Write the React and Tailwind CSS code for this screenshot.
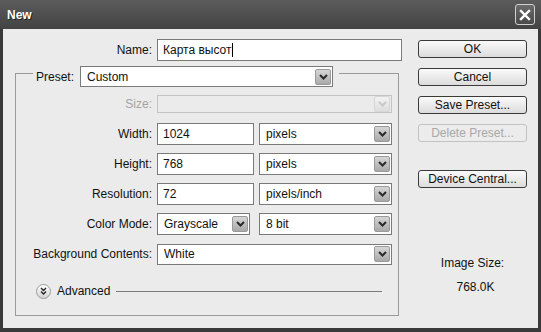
import React from "react";

function Chevron({ color = "#2a2a2a" }) {
  return (
    <svg width="9" height="6" viewBox="0 0 9 6">
      <path d="M1 1 L4.5 4.5 L8 1" fill="none" stroke={color} strokeWidth="2" />
    </svg>
  );
}

function Select({ className = "", text, disabled = false }) {
  return (
    <div
      className={`flex items-center justify-between border ${
        disabled ? "border-[#c4c4c4] bg-[#ebebeb]" : "border-[#7a7a7a] bg-white"
      } ${className}`}
    >
      <span className="pl-[6px] leading-none text-[#111]">{text}</span>
      <div
        className={`mr-[1px] flex h-[16px] w-[16px] items-center justify-center rounded-[2px] border ${
          disabled
            ? "border-[#d6d6d6] bg-gradient-to-b from-[#f2f2f2] to-[#dedede]"
            : "border-[#9a9a9a] bg-gradient-to-b from-[#d6d6d6] to-[#a9a9a9]"
        }`}
      >
        <Chevron color={disabled ? "#c8c8c8" : "#2a2a2a"} />
      </div>
    </div>
  );
}

function Input({ className = "", text, caret = false }) {
  return (
    <div className={`flex items-center border border-[#7a7a7a] bg-white ${className}`}>
      <span className="pl-[5px] leading-none text-[#111]">{text}</span>
      {caret && <span className="ml-[1px] h-[14px] w-[1px] bg-black" />}
    </div>
  );
}

function Row({ label, disabled = false, children, className = "mt-[8px]" }) {
  return (
    <div className={`flex h-[22px] items-center ${className}`}>
      <div className={`w-[136px] text-right ${disabled ? "text-[#a3a3a3]" : "text-[#111]"}`}>
        {label}
      </div>
      <div className="ml-[5px] flex items-center">{children}</div>
    </div>
  );
}

function Btn({ children, disabled = false, className = "" }) {
  return (
    <div
      className={`flex h-[18px] w-[109px] items-center justify-center rounded-[3px] border ${
        disabled
          ? "border-[#c2c2c2] text-[#a8a8a8] bg-[#ececec]"
          : "border-[#3a3a3a] text-[#111] bg-gradient-to-b from-[#fafafa] to-[#dcdcdc]"
      } ${className}`}
    >
      {children}
    </div>
  );
}

export default function App() {
  return (
    <div className="flex h-[332px] w-[541px] flex-col bg-[#3a3a3a] font-['Liberation_Sans',Arial,sans-serif] text-[12px]">
      {/* title bar */}
      <div className="flex h-[29px] items-center justify-between bg-gradient-to-b from-[#5c5c5c] to-[#434343] pl-[7px] pr-[6px]">
        <span className="text-[12px] font-bold text-white [text-shadow:1px_1px_0_#222]">New</span>
        <div className="flex h-[21px] w-[20px] items-center justify-center rounded-[3px] border border-[#d0d0d0] bg-gradient-to-b from-[#6a6a6a] to-[#4a4a4a]">
          <svg width="12" height="12" viewBox="0 0 12 12">
            <path d="M2 2 L10 10 M10 2 L2 10" stroke="white" strokeWidth="2.4" strokeLinecap="square" />
          </svg>
        </div>
      </div>

      {/* body */}
      <div className="mx-[3px] mb-[4px] flex flex-1 bg-[#ebebeb]">
        {/* left */}
        <div className="flex w-[400px] flex-col">
          <div className="mt-[10px] flex h-[22px] items-center">
            <div className="w-[149px] text-right text-[#111]">Name:</div>
            <Input className="ml-[5px] h-[22px] w-[245px]" text="Карта высот" caret />
          </div>

          <div className="ml-[12px] mt-[12px] flex h-[243px] w-[384px] flex-col border border-[#9a9a9a]">
            <div className="-mt-[8px] ml-[17px] flex w-fit items-center bg-[#ebebeb] pl-[3px] pr-[6px]">
              <span className="text-[#111]">Preset:</span>
              <Select className="ml-[6px] h-[21px] w-[253px]" text="Custom" />
            </div>

            <Row label="Size:" disabled className="mt-[6px]">
              <Select className="h-[18px] w-[235px]" text="" disabled />
            </Row>
            <Row label="Width:">
              <Input className="h-[22px] w-[97px]" text="1024" />
              <Select className="ml-[5px] h-[22px] w-[133px]" text="pixels" />
            </Row>
            <Row label="Height:">
              <Input className="h-[22px] w-[97px]" text="768" />
              <Select className="ml-[5px] h-[22px] w-[133px]" text="pixels" />
            </Row>
            <Row label="Resolution:">
              <Input className="h-[22px] w-[97px]" text="72" />
              <Select className="ml-[5px] h-[22px] w-[133px]" text="pixels/inch" />
            </Row>
            <Row label="Color Mode:">
              <Select className="h-[22px] w-[93px]" text="Grayscale" />
              <Select className="ml-[9px] h-[22px] w-[133px]" text="8 bit" />
            </Row>
            <Row label="Background Contents:">
              <Select className="h-[21px] w-[235px]" text="White" />
            </Row>

            <div className="ml-[20px] mr-[16px] mt-[18px] flex h-[16px] items-center">
              <div className="flex h-[15px] w-[15px] items-center justify-center rounded-full border border-[#9a9a9a] bg-gradient-to-b from-white to-[#d4d4d4]">
                <svg width="7" height="8" viewBox="0 0 7 8">
                  <path d="M1 1 L3.5 3.5 L6 1 M1 4.5 L3.5 7 L6 4.5" fill="none" stroke="#222" strokeWidth="1.3" />
                </svg>
              </div>
              <span className="ml-[6px] text-[#111]">Advanced</span>
              <div className="ml-[6px] h-[1px] flex-1 bg-[#7a7a7a]" />
            </div>
          </div>
        </div>

        {/* right */}
        <div className="ml-[15px] flex flex-col">
          <Btn className="mt-[11px]">OK</Btn>
          <Btn className="mt-[10px]">Cancel</Btn>
          <Btn className="mt-[10px]">Save Preset...</Btn>
          <Btn className="mt-[10px]" disabled>Delete Preset...</Btn>
          <Btn className="mt-[28px]">Device Central...</Btn>
          <div className="mt-[68px] w-[109px] text-center leading-[15px] text-[#111]">Image Size:</div>
          <div className="mt-[9px] w-[109px] pl-[6px] text-center leading-[15px] text-[#111]">768.0K</div>
        </div>
      </div>
    </div>
  );
}
